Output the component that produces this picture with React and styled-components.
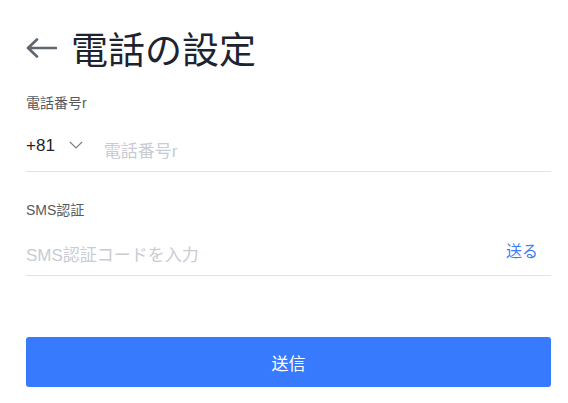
import React from "react";
import styled, { createGlobalStyle } from "styled-components";

const GlobalStyle = createGlobalStyle`
  body {
    margin: 0;
    background: #ffffff;
    font-family: "Liberation Sans", "Noto Sans CJK SC", sans-serif;
  }
`;

const Page = styled.div`
  width: 568px;
  padding: 24px 17px 0 26px;
  box-sizing: border-box;
`;

const Header = styled.div`
  display: flex;
  align-items: center;
  height: 48px;
  margin-bottom: 21px;
`;

const BackButton = styled.button`
  display: flex;
  align-items: center;
  border: none;
  background: none;
  padding: 0;
  margin-right: 14px;
  color: #5f6670;
  cursor: pointer;
`;

const Title = styled.h1`
  margin: 0;
  font-size: 37px;
  font-weight: 400;
  color: #1d2430;
  font-family: "Noto Sans CJK SC", sans-serif;
`;

const Field = styled.div`
  margin-bottom: ${(p) => p.gap || 0}px;
`;

const Label = styled.div`
  font-size: 14px;
  color: #555a62;
  line-height: 20px;
  margin-bottom: ${(p) => p.space}px;
`;

const InputRow = styled.div`
  display: flex;
  align-items: center;
  height: 38px;
  padding-top: 8px;
  border-bottom: 1px solid #e1e3e6;
`;

const CountryCode = styled.div`
  display: flex;
  align-items: center;
  font-size: 17px;
  color: #1d2430;
  margin-right: 21px;
  position: relative;
  top: -6px;
`;

const Chevron = styled.svg`
  margin-left: 14px;
  margin-top: -2px;
`;

const Input = styled.input`
  flex: 1;
  border: none;
  outline: none;
  padding: 0;
  font-size: 17px;
  font-family: "Liberation Sans", "Noto Sans CJK SC", sans-serif;
  color: #1d2430;
  &::placeholder {
    color: #c8ccd3;
  }
`;

const SendLink = styled.button`
  border: none;
  background: none;
  padding: 0;
  margin-right: 13px;
  position: relative;
  top: -6px;
  font-size: 16px;
  color: #3f7bf6;
  font-family: "Noto Sans CJK SC", sans-serif;
  cursor: pointer;
`;

const SubmitButton = styled.button`
  display: block;
  width: 525px;
  height: 50px;
  margin-top: 61px;
  border: none;
  border-radius: 3px;
  background: #377afe;
  color: #ffffff;
  font-size: 17px;
  font-family: "Noto Sans CJK SC", sans-serif;
  cursor: pointer;
`;

export default function App() {
  return (
    <Page>
      <GlobalStyle />
      <Header>
        <BackButton aria-label="戻る">
          <svg width="31" height="20" viewBox="0 0 31 20" fill="none">
            <path
              d="M30 10H2M11 1.5L2 10l9 8.5"
              stroke="currentColor"
              strokeWidth="2.6"
              strokeLinecap="round"
              strokeLinejoin="round"
            />
          </svg>
        </BackButton>
        <Title>電話の設定</Title>
      </Header>
      <Field gap={28}>
        <Label space={12}>電話番号r</Label>
        <InputRow>
          <CountryCode>
            +81
            <Chevron width="14" height="8" viewBox="0 0 14 8" fill="none">
              <path d="M1 1l6 6 6-6" stroke="#7a8088" strokeWidth="1.2" />
            </Chevron>
          </CountryCode>
          <Input placeholder="電話番号r" />
        </InputRow>
      </Field>
      <Field>
        <Label space={9}>SMS認証</Label>
        <InputRow>
          <Input placeholder="SMS認証コードを入力" />
          <SendLink>送る</SendLink>
        </InputRow>
      </Field>
      <SubmitButton>送信</SubmitButton>
    </Page>
  );
}
